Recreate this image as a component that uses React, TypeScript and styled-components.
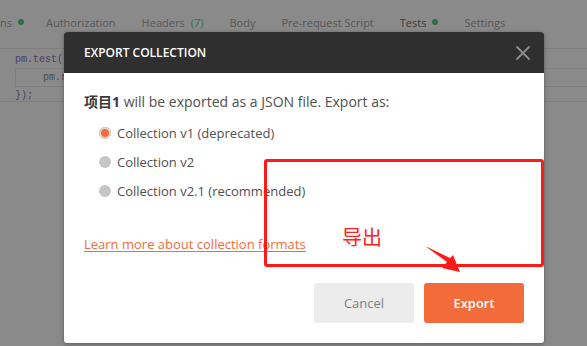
import React from 'react';
import styled, { createGlobalStyle } from 'styled-components';
import { X } from 'lucide-react';

const GlobalStyle = createGlobalStyle`
  html, body {
    margin: 0;
    padding: 0;
    background: #8a8a8a;
  }
  * {
    box-sizing: border-box;
  }
`;

const Page = styled.div`
  position: relative;
  width: 587px;
  height: 346px;
  overflow: hidden;
  background: #8a8a8a;
  font-family: 'Open Sans', 'Noto Sans CJK SC', sans-serif;
`;

const TabBar = styled.div`
  display: flex;
  align-items: center;
  height: 49px;
  padding-bottom: 4px;
  gap: 26px;
  border-bottom: 1px solid #7e7e7e;
  font-size: 11px;
  white-space: nowrap;
`;

const Tab = styled.span<{ $active?: boolean; $lead?: boolean }>`
  display: flex;
  align-items: center;
  gap: 6px;
  margin-right: ${(p) => (p.$lead ? '-4px' : '0')};
  color: ${(p) => (p.$active ? '#3a3a3a' : '#575757')};
`;

const Dot = styled.span`
  width: 6px;
  height: 6px;
  border-radius: 50%;
  background: #2f6e42;
`;

const Count = styled.span`
  color: #3d6c48;
`;

const Code = styled.div`
  padding-top: 2px;
  height: 53px;
  border-bottom: 1px solid #7e7e7e;
  font-family: 'Liberation Mono', monospace;
  font-size: 10px;
  line-height: 17px;
  color: #4a3f66;
`;

const CodeLine = styled.div<{ $indent?: boolean }>`
  padding-left: 15px;
  ${(p) =>
    p.$indent &&
    `
    margin-left: 15px;
    padding-left: 27px;
    border-left: 1px solid #7e7e7e;
    border-top: 1px solid #828282;
    border-bottom: 1px solid #7e7e7e;
    color: #4a4a5a;
  `}
`;

const Modal = styled.div`
  position: absolute;
  left: 64px;
  top: 32px;
  width: 480px;
  height: 311px;
  background: #fff;
  border-radius: 3px;
  overflow: hidden;
  box-shadow: 0 1px 4px rgba(0, 0, 0, 0.35);
  display: flex;
  flex-direction: column;
`;

const Header = styled.div`
  height: 41px;
  background: #2f2f2f;
  display: flex;
  align-items: center;
  justify-content: space-between;
  padding: 0 9px 0 20px;
`;

const Title = styled.h2`
  margin: 0;
  font-size: 12px;
  font-weight: 600;
  color: #fff;
`;

const Close = styled.button`
  border: 0;
  background: none;
  padding: 0;
  display: flex;
  color: #8c8c8c;
`;

const Body = styled.div`
  flex: 1;
  padding: 20px;
  display: flex;
  flex-direction: column;
  font-size: 13px;
  color: #505050;
`;

const Intro = styled.p`
  margin: 0;
  font-size: 14px;
  line-height: 18px;
  strong {
    font-weight: 700;
    color: #3a3a3a;
  }
`;

const Options = styled.div`
  display: flex;
  flex-direction: column;
  gap: 10px;
  margin-top: 13px;
  padding-left: 15px;
`;

const Option = styled.label`
  display: flex;
  align-items: center;
  gap: 6px;
  height: 19px;
  line-height: 19px;
`;

const Radio = styled.span<{ $checked?: boolean }>`
  width: 12px;
  height: 12px;
  border-radius: 50%;
  background: ${(p) => (p.$checked ? '#f26b3a' : '#c6c6c6')};
  box-shadow: ${(p) => (p.$checked ? 'inset 0 0 0 2px #d9d9d9' : 'none')};
  margin-top: -2px;
`;

const Link = styled.a`
  margin-top: 34px;
  color: #f26b3a;
  text-decoration: underline;
  text-underline-offset: 2px;
  line-height: 18px;
  align-self: flex-start;
`;

const Actions = styled.div`
  margin-top: auto;
  display: flex;
  justify-content: flex-end;
  gap: 10px;
`;

const Button = styled.button<{ $primary?: boolean }>`
  width: 100px;
  height: 40px;
  border: 0;
  border-radius: 3px;
  font-family: 'Open Sans', sans-serif;
  font-size: 13px;
  background: ${(p) => (p.$primary ? '#f26b3a' : '#ececec')};
  color: ${(p) => (p.$primary ? '#fff' : '#808080')};
  font-weight: ${(p) => (p.$primary ? 600 : 400)};
`;

const Annotation = styled.div`
  position: absolute;
  left: 264px;
  top: 159px;
  width: 280px;
  height: 108px;
  border: 3px solid #ff1a1a;
  border-radius: 3px;
`;

const AnnotationText = styled.span`
  position: absolute;
  left: 342px;
  top: 225px;
  font-family: 'Noto Sans CJK SC', sans-serif;
  font-size: 20px;
  line-height: 24px;
  color: #ff2020;
`;

const Arrow = styled.svg`
  position: absolute;
  left: 0;
  top: 0;
  pointer-events: none;
`;

const App = () => {
  const tabs = [
    { label: 'ns', dot: true, lead: true },
    { label: 'Authorization' },
    { label: 'Headers', count: '(7)' },
    { label: 'Body' },
    { label: 'Pre-request Script' },
    { label: 'Tests', dot: true, active: true },
    { label: 'Settings' },
  ];

  const formats = [
    { label: 'Collection v1 (deprecated)', checked: true },
    { label: 'Collection v2' },
    { label: 'Collection v2.1 (recommended)' },
  ];

  return (
    <Page>
      <GlobalStyle />
      <TabBar>
        {tabs.map((t) => (
          <Tab key={t.label} $active={t.active} $lead={t.lead}>
            {t.label}
            {t.count && <Count>{t.count}</Count>}
            {t.dot && <Dot />}
          </Tab>
        ))}
      </TabBar>
      <Code>
        <CodeLine>pm.test(</CodeLine>
        <CodeLine $indent>pm.r</CodeLine>
        <CodeLine>{'});'}</CodeLine>
      </Code>

      <Modal>
        <Header>
          <Title>EXPORT COLLECTION</Title>
          <Close>
            <X size={24} strokeWidth={1.8} />
          </Close>
        </Header>
        <Body>
          <Intro>
            <strong>项目1</strong> will be exported as a JSON file. Export as:
          </Intro>
          <Options>
            {formats.map((f) => (
              <Option key={f.label}>
                <Radio $checked={f.checked} />
                {f.label}
              </Option>
            ))}
          </Options>
          <Link href="#">Learn more about collection formats</Link>
          <Actions>
            <Button>Cancel</Button>
            <Button $primary>Export</Button>
          </Actions>
        </Body>
      </Modal>

      <Annotation />
      <AnnotationText>导出</AnnotationText>
      <Arrow width="587" height="346" viewBox="0 0 587 346">
        <polygon
          points="425,246 450,258 453,255 460,272 442,268 447,262"
          fill="#ff1a1a"
        />
      </Arrow>
    </Page>
  );
};

export default App;
